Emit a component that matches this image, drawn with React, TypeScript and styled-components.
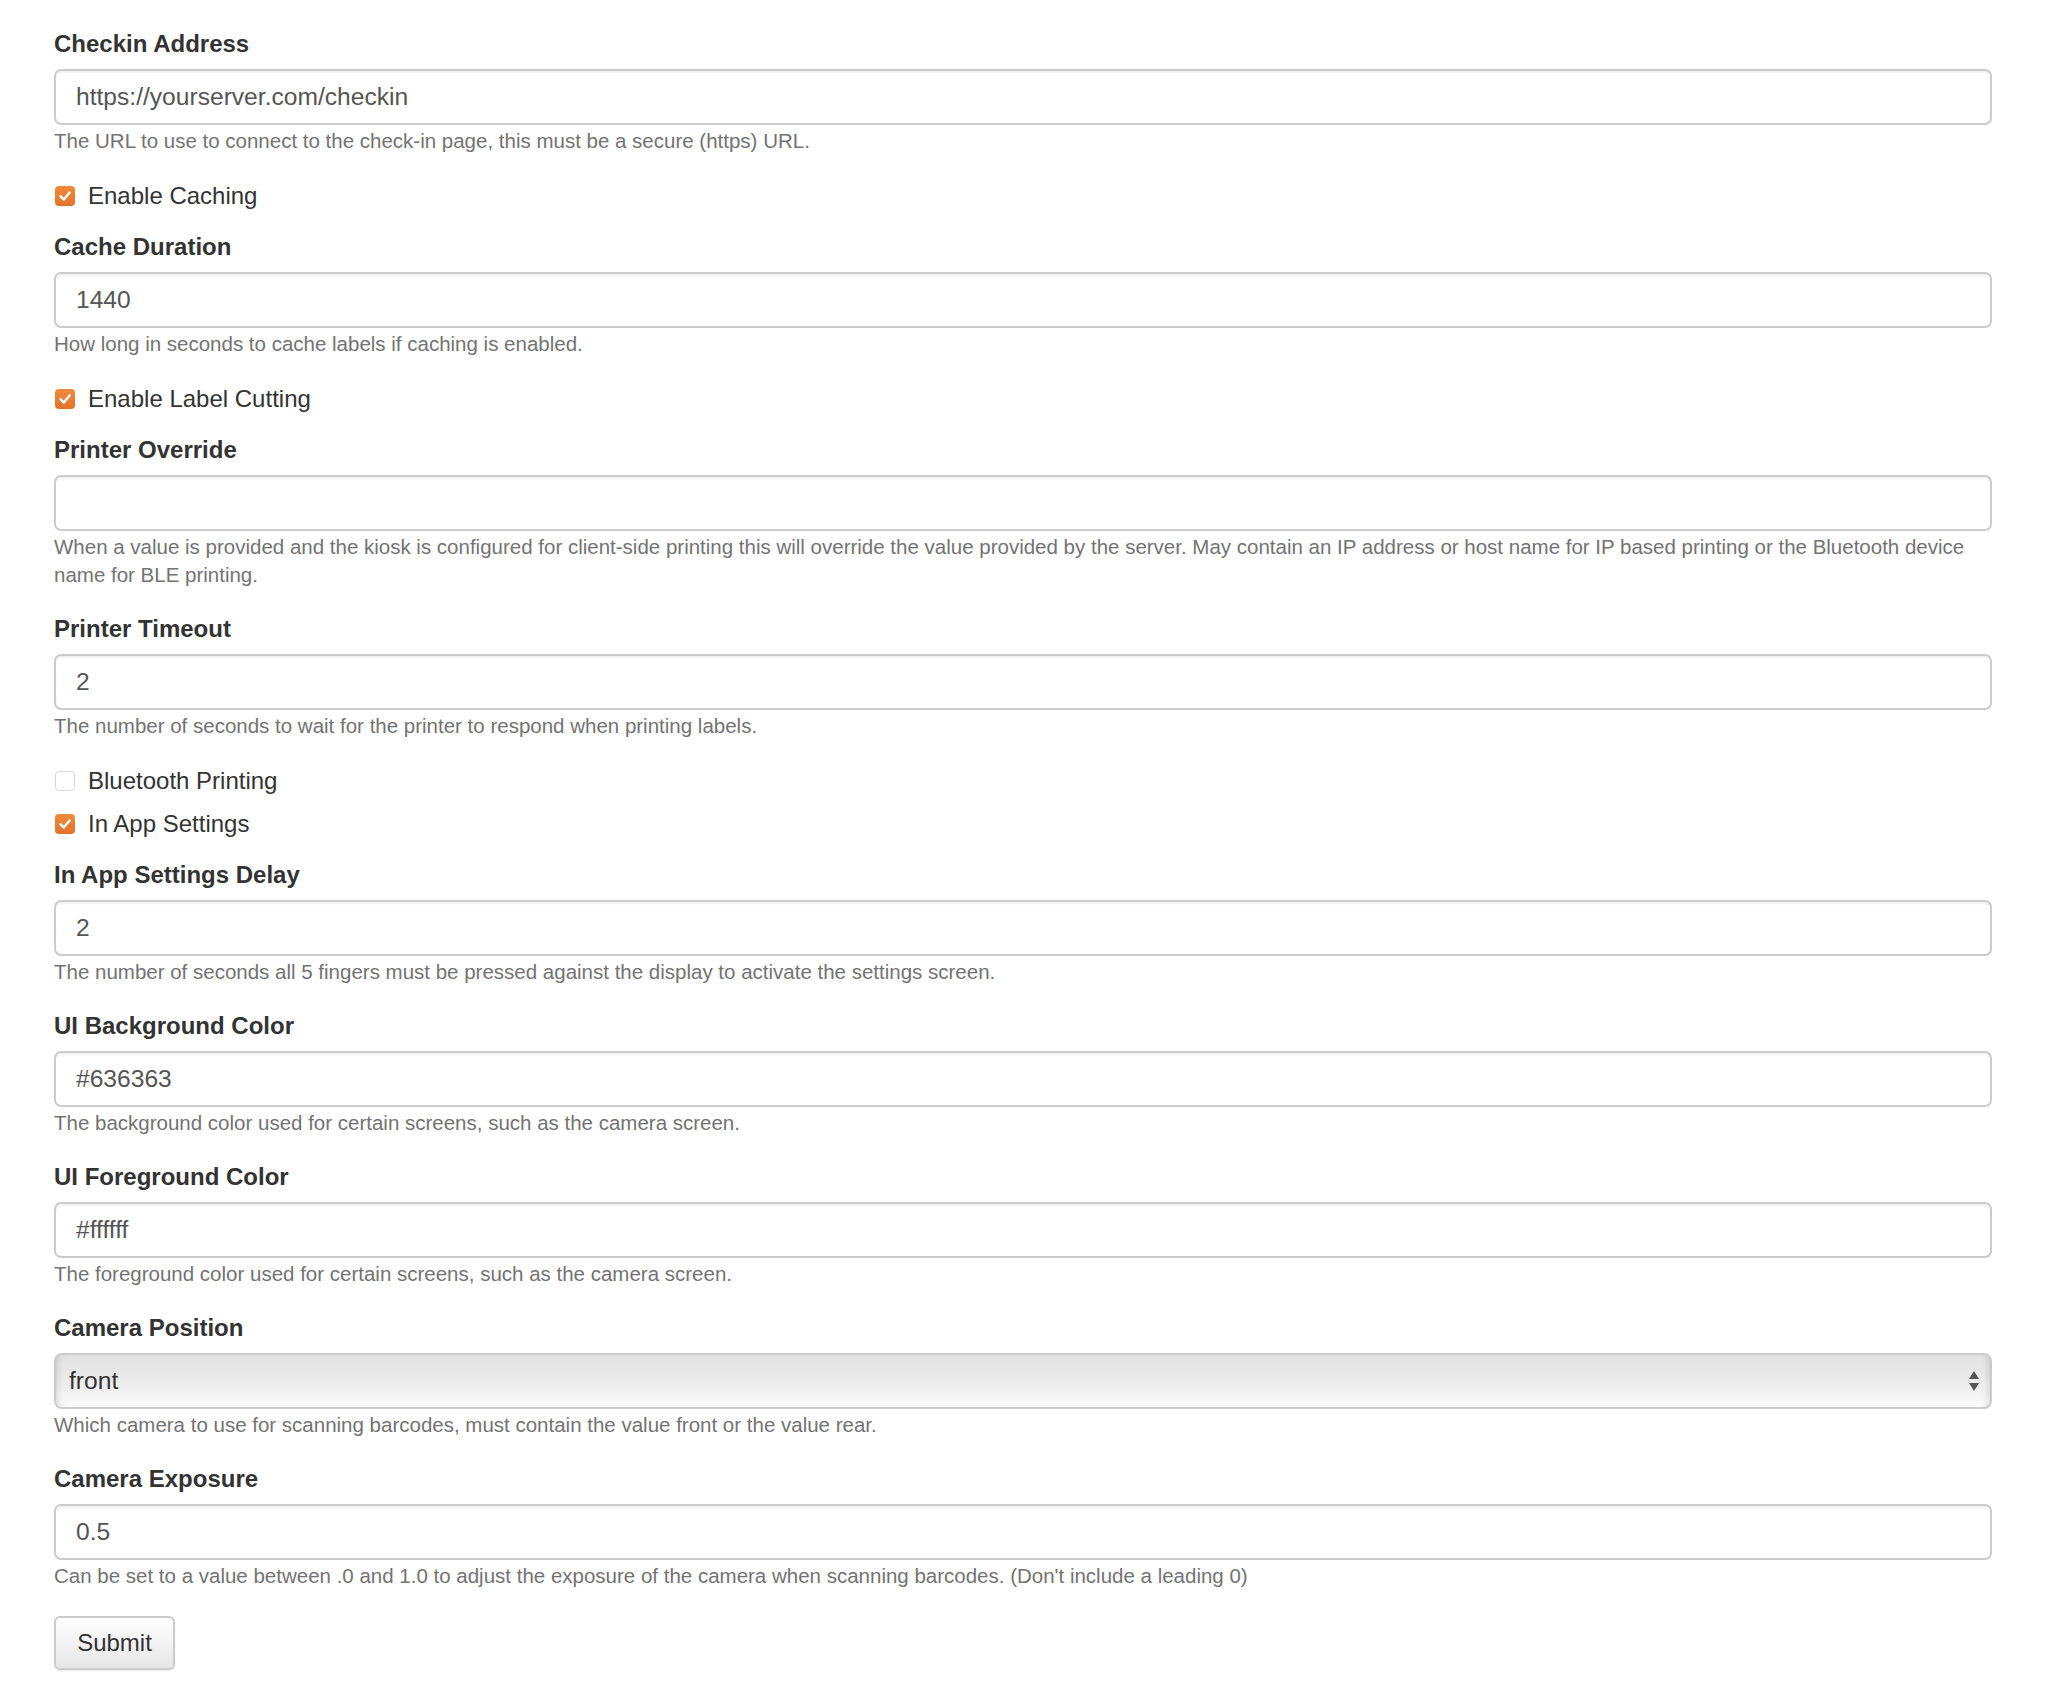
import React from 'react';
import styled, { createGlobalStyle } from 'styled-components';

const GlobalStyle = createGlobalStyle`
    html, body {
        margin: 0;
        padding: 0;
        background: #ffffff;
    }
    body {
        font-family: 'Liberation Sans', Arial, Helvetica, sans-serif;
        color: #333333;
    }
`;

type Field = {
    kind: 'text' | 'select' | 'check';
    label: string;
    value?: string;
    help?: string;
    checked?: boolean;
};

const fields: Field[] = [
    {
        kind: 'text',
        label: 'Checkin Address',
        value: 'https://yourserver.com/checkin',
        help: 'The URL to use to connect to the check-in page, this must be a secure (https) URL.',
    },
    { kind: 'check', label: 'Enable Caching', checked: true },
    {
        kind: 'text',
        label: 'Cache Duration',
        value: '1440',
        help: 'How long in seconds to cache labels if caching is enabled.',
    },
    { kind: 'check', label: 'Enable Label Cutting', checked: true },
    {
        kind: 'text',
        label: 'Printer Override',
        value: '',
        help: 'When a value is provided and the kiosk is configured for client-side printing this will override the value provided by the server. May contain an IP address or host name for IP based printing or the Bluetooth device name for BLE printing.',
    },
    {
        kind: 'text',
        label: 'Printer Timeout',
        value: '2',
        help: 'The number of seconds to wait for the printer to respond when printing labels.',
    },
    { kind: 'check', label: 'Bluetooth Printing', checked: false },
    { kind: 'check', label: 'In App Settings', checked: true },
    {
        kind: 'text',
        label: 'In App Settings Delay',
        value: '2',
        help: 'The number of seconds all 5 fingers must be pressed against the display to activate the settings screen.',
    },
    {
        kind: 'text',
        label: 'UI Background Color',
        value: '#636363',
        help: 'The background color used for certain screens, such as the camera screen.',
    },
    {
        kind: 'text',
        label: 'UI Foreground Color',
        value: '#ffffff',
        help: 'The foreground color used for certain screens, such as the camera screen.',
    },
    {
        kind: 'select',
        label: 'Camera Position',
        value: 'front',
        help: 'Which camera to use for scanning barcodes, must contain the value front or the value rear.',
    },
    {
        kind: 'text',
        label: 'Camera Exposure',
        value: '0.5',
        help: "Can be set to a value between .0 and 1.0 to adjust the exposure of the camera when scanning barcodes. (Don't include a leading 0)",
    },
];

const CheckIcon = () => (
    <svg width="14" height="14" viewBox="0 0 14 14">
        <polyline points="2.5,7.2 5.8,10.6 11.6,3.4" fill="none" stroke="#ffffff" strokeWidth="2.4" strokeLinecap="round" strokeLinejoin="round" />
    </svg>
);

const SelectArrows = () => (
    <svg width="12" height="22" viewBox="0 0 12 22">
        <polygon points="6,1 11,9 1,9" fill="#555555" />
        <polygon points="1,13 11,13 6,21" fill="#555555" />
    </svg>
);

const App = () => {
    return (
        <>
            <GlobalStyle />
            <Form>
                {fields.map((f, i) => {
                    if (f.kind === 'check') {
                        const nextIsCheck = fields[i + 1]?.kind === 'check';
                        return (
                            <CheckRow key={f.label} $tight={nextIsCheck}>
                                <Box $checked={!!f.checked}>{f.checked && <CheckIcon />}</Box>
                                <CheckLabel>{f.label}</CheckLabel>
                            </CheckRow>
                        );
                    }
                    return (
                        <FormGroup key={f.label}>
                            <Label>{f.label}</Label>
                            {f.kind === 'select' ? (
                                <Select>
                                    <span>{f.value}</span>
                                    <SelectArrows />
                                </Select>
                            ) : (
                                <Input type="text" defaultValue={f.value} />
                            )}
                            <Help>{f.help}</Help>
                        </FormGroup>
                    );
                })}
                <SubmitButton type="button">Submit</SubmitButton>
            </Form>
        </>
    );
};

export default App;

const Form = styled.div`
    display: flex;
    flex-direction: column;
    align-items: stretch;
    padding: 27px 74px 40px 54px;
`;

const FormGroup = styled.div`
    display: flex;
    flex-direction: column;
    margin-bottom: 23px;
`;

const Label = styled.div`
    font-size: 24px;
    line-height: 34px;
    font-weight: 700;
    color: #333333;
    margin-bottom: 8px;
`;

const Input = styled.input`
    box-sizing: border-box;
    height: 56px;
    width: 100%;
    padding: 0 20px;
    border: 2px solid #cccccc;
    border-radius: 7px;
    box-shadow: inset 0 2px 2px rgba(0, 0, 0, 0.06);
    font-family: 'Liberation Sans', Arial, sans-serif;
    font-size: 24.6px;
    color: #555555;
    background: #ffffff;
    outline: none;
`;

const Select = styled.div`
    box-sizing: border-box;
    height: 56px;
    display: flex;
    align-items: center;
    justify-content: space-between;
    padding: 0 10px 0 13px;
    border: 2px solid #cccccc;
    border-radius: 8px;
    background: linear-gradient(to bottom, #e2e2e2 0%, #eaeaea 45%, #fafafa 100%);
    box-shadow: inset 6px 0 6px -5px rgba(0, 0, 0, 0.14), inset -6px 0 6px -5px rgba(0, 0, 0, 0.14);
    font-size: 24.6px;
    color: #333333;
`;

const Help = styled.div`
    margin-top: 2px;
    font-size: 20.5px;
    line-height: 28px;
    color: #737373;
`;

const CheckRow = styled.div<{ $tight: boolean }>`
    display: flex;
    align-items: center;
    gap: 13px;
    height: 35px;
    margin-bottom: ${(p) => (p.$tight ? '8px' : '17px')};
    padding-left: 1px;
`;

const Box = styled.span<{ $checked: boolean }>`
    box-sizing: border-box;
    width: 20px;
    height: 20px;
    border-radius: 4px;
    display: flex;
    align-items: center;
    justify-content: center;
    background: ${(p) => (p.$checked ? 'linear-gradient(to bottom, #f08a3c, #e4732a)' : '#ffffff')};
    border: ${(p) => (p.$checked ? 'none' : '1.5px solid #d6d6d6')};
`;

const CheckLabel = styled.span`
    font-size: 24px;
    line-height: 34px;
    color: #333333;
`;

const SubmitButton = styled.button`
    align-self: flex-start;
    margin-top: 3px;
    width: 121px;
    height: 54px;
    border: 2px solid #cccccc;
    border-radius: 6px;
    background: linear-gradient(to bottom, #ffffff 0%, #e6e6e6 100%);
    box-shadow: 0 1px 2px rgba(0, 0, 0, 0.1);
    font-family: 'Liberation Sans', Arial, sans-serif;
    font-size: 24px;
    color: #333333;
    padding: 0;
`;
